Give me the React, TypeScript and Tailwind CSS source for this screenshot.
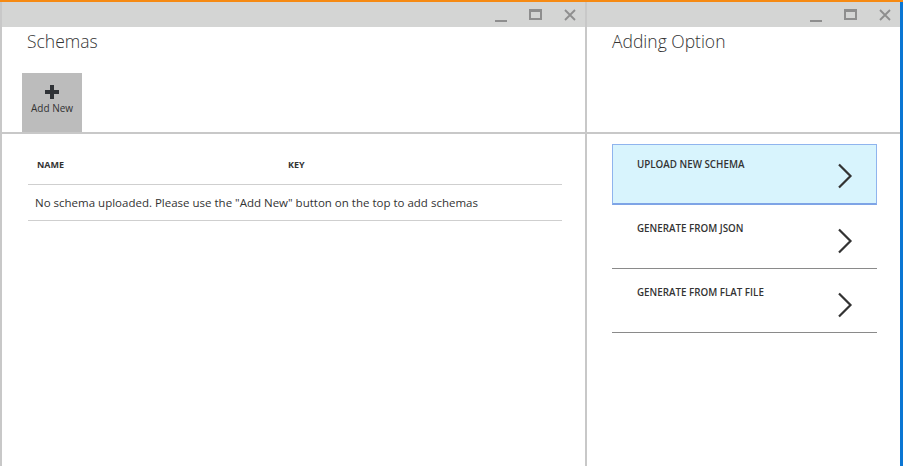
import React from "react";

const font = { fontFamily: '"Open Sans", "Noto Sans", "Liberation Sans", sans-serif' };

function TitleBar() {
  return (
    <div className="h-[25px] bg-[#d4d5d4] flex items-center justify-end pr-[9px] shrink-0">
      <div className="w-[12px] h-[12px] flex items-end justify-center">
        <div className="w-[12px] h-[2px] bg-[#8e8e8e] mb-[-1px]" />
      </div>
      <div className="ml-[22px] w-[13px] h-[11px] border-2 border-t-[3px] border-[#8e8e8e]" />
      <svg className="ml-[22px]" width="12" height="12" viewBox="0 0 12 12">
        <path d="M1 1 L11 11 M11 1 L1 11" stroke="#8e8e8e" strokeWidth="1.8" />
      </svg>
    </div>
  );
}

function Chevron() {
  return (
    <svg width="16" height="26" viewBox="0 0 16 26">
      <path d="M2 1.5 L13.5 13 L2 24.5" fill="none" stroke="#333" strokeWidth="2.2" />
    </svg>
  );
}

export default function App() {
  return (
    <div className="w-[903px] h-[466px] flex flex-col bg-white overflow-hidden text-[#333]" style={font}>
      <div className="h-[2px] bg-[#f68a13] shrink-0" />
      <div className="flex flex-1 min-h-0">
        <div className="w-[2px] bg-[#c8c8c8] shrink-0" />
        {/* Blade 1 */}
        <div className="w-[583px] flex flex-col shrink-0">
          <TitleBar />
          <div className="h-[105px] flex flex-col shrink-0">
            <div className="pl-[25px] pt-[2px] text-[17.5px] font-light leading-[25px] text-[#333]">Schemas</div>
            <div className="mt-auto ml-[20px] w-[60px] h-[59px] bg-[#bcbcbc] flex flex-col items-center">
              <svg className="mt-[12px]" width="14" height="14" viewBox="0 0 14 14">
                <path d="M5 0 H9 V5 H14 V9 H9 V14 H5 V9 H0 V5 H5 Z" fill="#2f3236" />
              </svg>
              <div className="mt-[3px] text-[10px] leading-[13px] text-[#333]">Add New</div>
            </div>
          </div>
          <div className="h-[2px] bg-[#c8c8c8] shrink-0" />
          <div className="flex-1 pt-[12px] pl-[26px]">
            <div className="w-[534px]">
              <div className="h-[39px] flex items-center border-b border-[#cfcfcf] text-[9px] font-bold text-[#333]">
                <div className="pl-[9px] w-[260px]">NAME</div>
                <div>KEY</div>
              </div>
              <div className="h-[36px] flex items-center border-b border-[#cfcfcf] pl-[7px] text-[11.5px] text-[#333]">
                No schema uploaded. Please use the "Add New" button on the top to add schemas
              </div>
            </div>
          </div>
        </div>
        <div className="w-[2px] bg-[#c8c8c8] shrink-0" />
        {/* Blade 2 */}
        <div className="w-[313px] flex flex-col shrink-0">
          <TitleBar />
          <div className="h-[105px] shrink-0">
            <div className="pl-[25px] pt-[2px] text-[17.5px] font-light leading-[25px] text-[#333]">Adding Option</div>
          </div>
          <div className="h-[2px] bg-[#c8c8c8] shrink-0" />
          <div className="flex-1 pt-[10px] pl-[25px]">
            <div className="w-[265px] flex flex-col">
              <div className="h-[61px] bg-[#d8f4fd] border border-[#8fb4ee] border-b-2 border-b-[#7ea4e6] flex justify-between pl-[24px] pr-[23px]">
                <div className="pt-[14px] text-[9.8px] font-semibold leading-[12px]">UPLOAD NEW SCHEMA</div>
                <div className="pt-[18px]"><Chevron /></div>
              </div>
              <div className="h-[64px] border-b border-[#8a8a8a] flex justify-between pl-[25px] pr-[24px]">
                <div className="pt-[18px] text-[9.8px] font-semibold leading-[12px]">GENERATE FROM JSON</div>
                <div className="pt-[23px]"><Chevron /></div>
              </div>
              <div className="h-[64px] border-b border-[#8a8a8a] flex justify-between pl-[25px] pr-[24px]">
                <div className="pt-[18px] text-[9.8px] font-semibold leading-[12px]">GENERATE FROM FLAT FILE</div>
                <div className="pt-[23px]"><Chevron /></div>
              </div>
            </div>
          </div>
        </div>
        <div className="w-[3px] bg-[#0b76d3] shrink-0" />
      </div>
    </div>
  );
}
